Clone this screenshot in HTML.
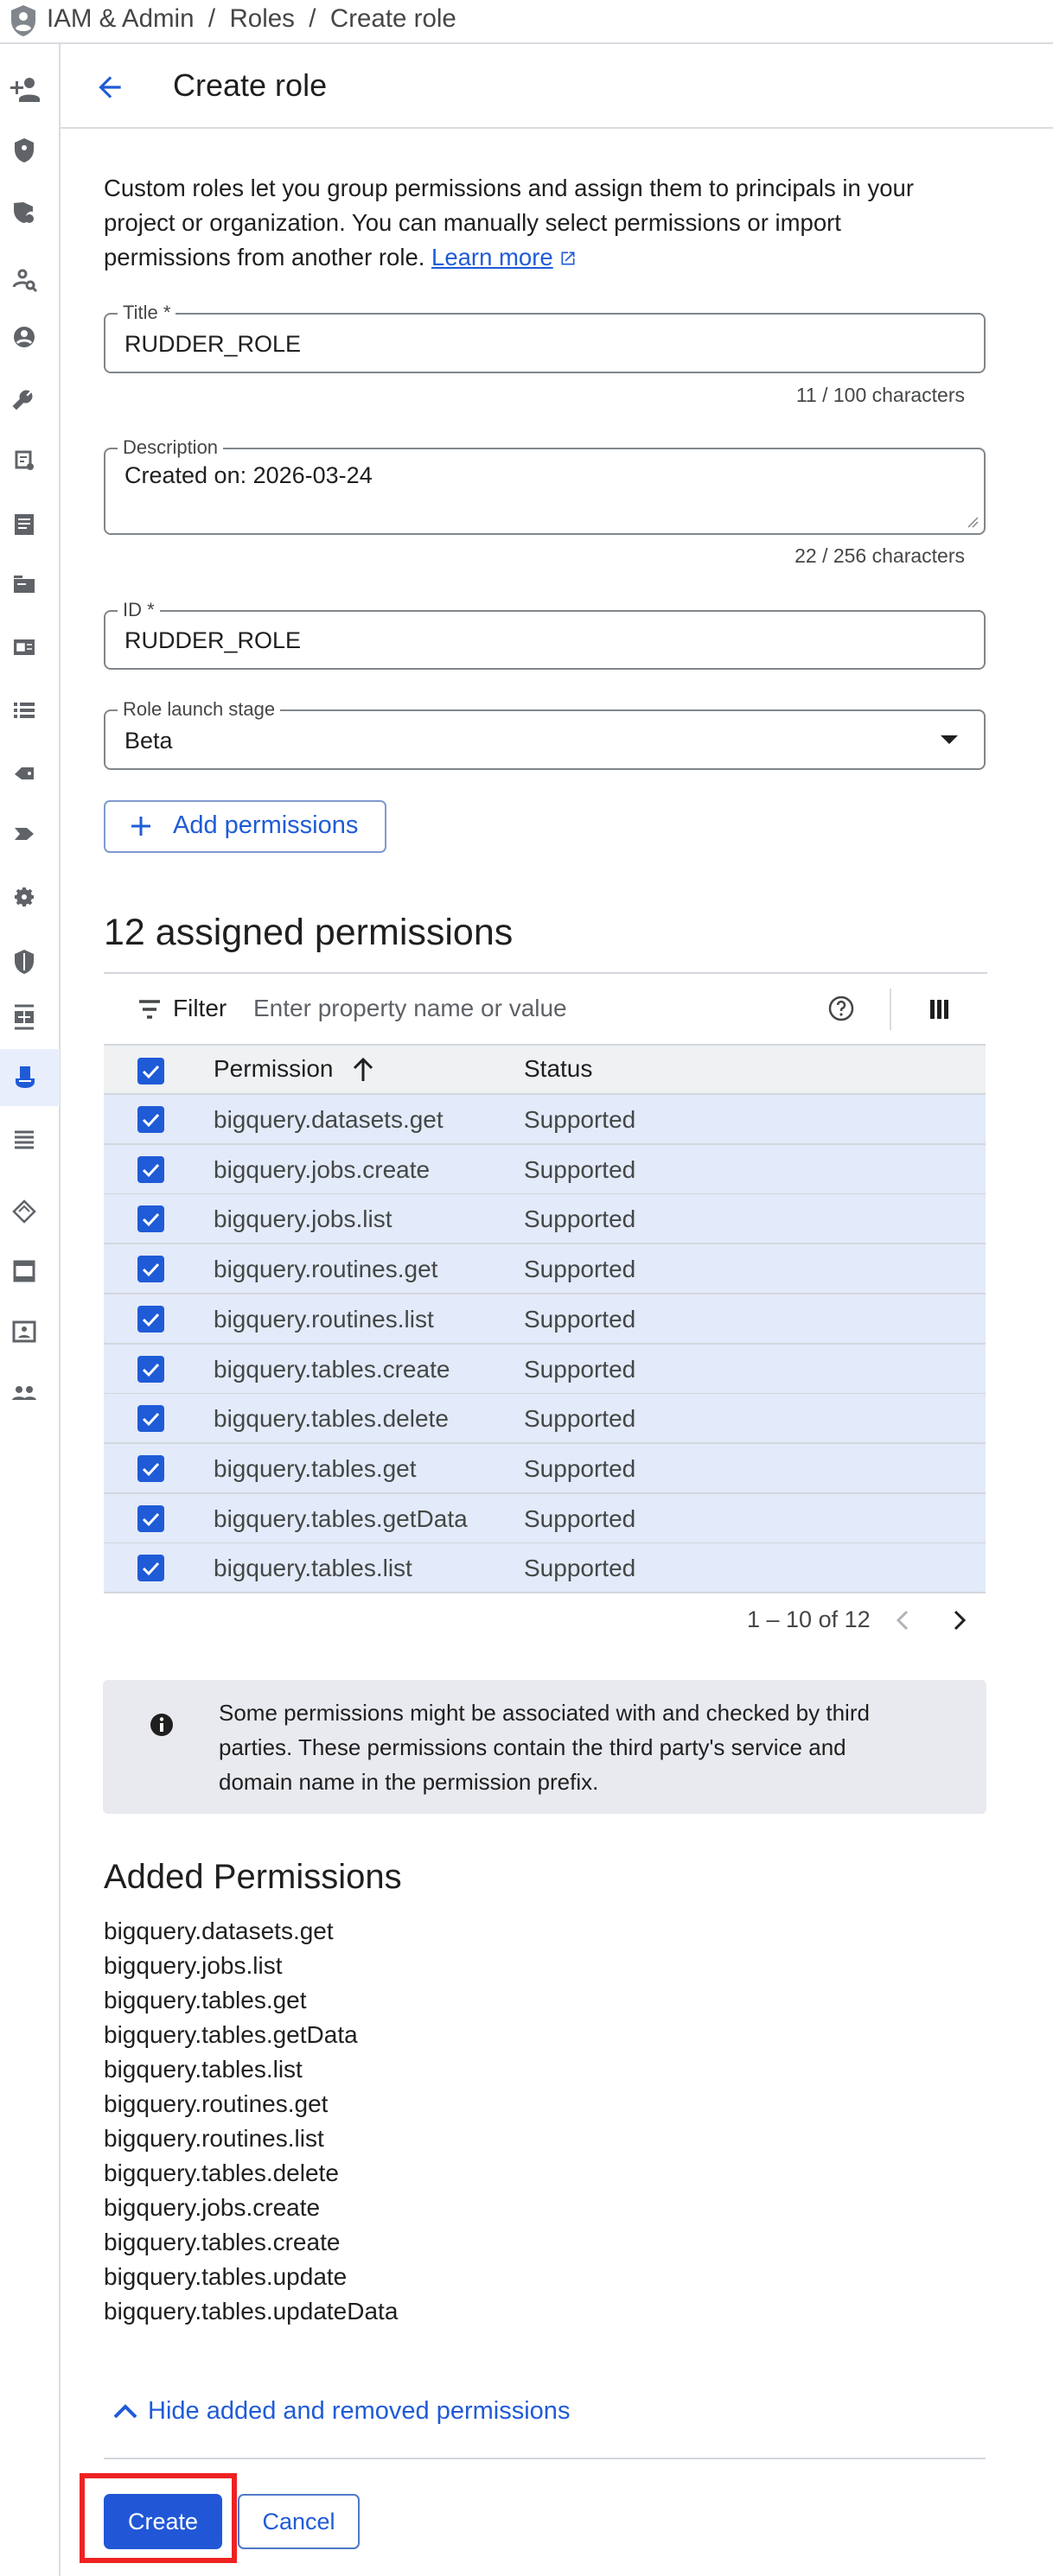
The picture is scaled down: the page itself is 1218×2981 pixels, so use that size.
<!DOCTYPE html>
<html><head><meta charset="utf-8">
<style>
*{box-sizing:border-box;margin:0;padding:0}
body{width:1218px;height:2981px;background:#fff;font-family:"Liberation Sans",Arial,sans-serif;color:#1f1f1f;position:relative;overflow:hidden}
.a{position:absolute;white-space:nowrap}
.hdr{left:0;top:0;width:1218px;height:51px;border-bottom:2px solid #dadce0}
.side{left:0;top:51px;width:70px;height:2930px;border-right:2px solid #dadce0}
.field{position:absolute;left:120px;width:1020px;border:2px solid #80868b;border-radius:8px}
.lab{position:absolute;top:-14px;left:14px;background:#fff;padding:0 6px;font-size:22px;color:#444746;line-height:24px}
.val{position:absolute;left:22px;font-size:27px;color:#1f1f1f}
.help{font-size:23px;color:#444746;right:102px}
.row{position:absolute;left:120px;width:1020px;height:58px;background:#e3eaf9;border-bottom:2px solid #d3d7de}
.cb{position:absolute;left:39px;top:13px;width:31px;height:31px;background:#1f5bd7;border-radius:4px}
.cb svg{position:absolute;left:3px;top:3px}
.row .p{position:absolute;left:127px;top:13px;font-size:28px;color:#444746}
.row .s{position:absolute;left:486px;top:13px;font-size:28px;color:#444746}
.lst div{font-size:28px;line-height:40px;color:#1f1f1f}
</style></head><body>
<div class="a hdr"></div>
<svg class="a" style="left:12px;top:5px" width="30" height="38" viewBox="0 0 30 38"><path d="M15 1 L29 7 V19 C29 28 22 35 15 37 C8 35 1 28 1 19 V7 Z" fill="#80868b"/><circle cx="15" cy="14" r="5" fill="#fff"/><path d="M6 28 C8 22 22 22 24 28 C21 32 9 32 6 28Z" fill="#fff"/></svg>
<div class="a" style="left:54px;top:5px;font-size:29.5px;color:#444746">IAM &amp; Admin &nbsp;/&nbsp; Roles &nbsp;/&nbsp; Create role</div>
<div class="a side"></div>
<div class="a" style="left:0;top:1214px;width:69px;height:66px;background:#e8eefb"></div>
<svg class="a" style="left:0;top:80px" width="60" height="1560" viewBox="0 0 60 1560" fill="#5f6368">
<g transform="translate(0,-80)">
<path d="M12 100h6v-6h3v6h6v3h-6v6h-3v-6h-6z"/><circle cx="34" cy="96" r="6"/><path d="M22 114c2-6 22-6 24 0v4H22z"/>
<path d="M28 160l11 5v8c0 8-5 13-11 15-6-2-11-7-11-15v-8z M28 168a3 3 0 1 0 .01 0z" fill-rule="evenodd"/>
<path d="M27 234l11 5v6c-4-1-8 2-8 6 0 2 1 4 2 5-1 1-3 2-5 2-6-2-11-7-11-15v-8z"/><circle cx="34" cy="253" r="5"/>
<circle cx="26" cy="317" r="4" fill="none" stroke="#5f6368" stroke-width="3"/><path d="M16 332c1-5 12-6 14-4" fill="none" stroke="#5f6368" stroke-width="3"/><circle cx="35" cy="330" r="4" fill="none" stroke="#5f6368" stroke-width="3"/><path d="M38 333l4 4" stroke="#5f6368" stroke-width="3"/>
<circle cx="28" cy="390" r="12"/><circle cx="28" cy="386" r="4" fill="#fff"/><path d="M20 397c3-4 13-4 16 0" fill="none" stroke="#fff" stroke-width="3"/>
<path d="M16 470l8-8a7 7 0 0 1 9-9l-4 4 3 3 4-4a7 7 0 0 1-9 9l-8 8z" stroke="#5f6368" stroke-width="2"/>
<path d="M19 523h16v18H19z" fill="none" stroke="#5f6368" stroke-width="3"/><path d="M23 529h8M23 534h5" stroke="#5f6368" stroke-width="2"/><circle cx="35" cy="540" r="4"/>
<path d="M17 595h22v24H17z"/><path d="M21 601h14M21 606h14M21 611h10" stroke="#fff" stroke-width="2"/>
<path d="M16 670h24v16H16z M16 666h10v3H16z"/><path d="M20 676h10" stroke="#fff" stroke-width="2"/>
<path d="M16 740h24v18H16z"/><path d="M20 745h8v8h-8zM31 746h6M31 751h6" stroke="#fff" stroke-width="1.5" fill="#fff"/>
<path d="M16 813h4v4h-4zM23 813h17v4H23zM16 820h4v4h-4zM23 820h17v4H23zM16 827h4v4h-4zM23 827h17v4H23z"/>
<path d="M17 896l8-8h14v14H25z"/><circle cx="34" cy="895" r="2" fill="#fff"/>
<path d="M17 958h14l8 7-8 7H17l6-7z"/>
<circle cx="28" cy="1038" r="9"/><path d="M28 1027v22M17 1038h22M20 1030l16 16M36 1030l-16 16" stroke="#5f6368" stroke-width="4"/><circle cx="28" cy="1038" r="3" fill="#fff"/>
<path d="M28 1099l11 5v8c0 8-5 13-11 15-6-2-11-7-11-15v-8z"/><path d="M28 1103v20" stroke="#fff" stroke-width="2"/>
<path d="M17 1164h22M17 1190h22" stroke="#5f6368" stroke-width="3"/><path d="M17 1170h22v14H17z"/><path d="M28 1170v14M21 1177h14" stroke="#fff" stroke-width="2"/>
<path d="M17 1310h22M17 1316h22M17 1322h22M17 1328h22" stroke="#5f6368" stroke-width="3"/>
<path d="M28 1390l12 12-12 12-12-12z" fill="none" stroke="#5f6368" stroke-width="2.5"/><path d="M22 1402l6-6 6 6" fill="none" stroke="#5f6368" stroke-width="2"/>
<path d="M17 1460h22v22H17z" fill="none" stroke="#5f6368" stroke-width="3"/><path d="M17 1460h22v5H17zM17 1477h22v5H17z"/>
<path d="M16 1530h24v22H16z" fill="none" stroke="#5f6368" stroke-width="3"/><circle cx="28" cy="1538" r="3"/><path d="M21 1548c2-4 12-4 14 0z"/>
<circle cx="22" cy="1608" r="4"/><circle cx="34" cy="1608" r="4"/><path d="M14 1620c1-5 15-5 16 0zM27 1620c1-5 14-5 15 0z"/>
</g></svg>
<svg class="a" style="left:14px;top:1232px" width="30" height="30" viewBox="0 0 30 30"><path d="M9 2h12v14H9z M4 16h22v4c0 4-4 7-11 7S4 24 4 20z" fill="#1f5bd7"/><path d="M8 19h14" stroke="#fff" stroke-width="2"/></svg>

<svg class="a" style="left:108px;top:82px" width="38" height="38" viewBox="0 0 24 24"><path d="M20 11H7.8l5.6-5.6L12 4l-8 8 8 8 1.4-1.4L7.8 13H20z" fill="#1f5bd7"/></svg>
<div class="a" style="left:200px;top:78px;font-size:36px;color:#1f1f1f">Create role</div>
<div class="a" style="left:70px;top:147px;width:1148px;height:2px;background:#dadce0"></div>

<div class="a" style="left:120px;top:198px;font-size:27.5px;line-height:40px;color:#1f1f1f;white-space:normal;width:1000px">Custom roles let you group permissions and assign them to principals in your project or organization. You can manually select permissions or import permissions from another role. <span style="color:#1f5bd7;text-decoration:underline">Learn more</span> <svg width="20" height="20" viewBox="0 0 24 24" style="vertical-align:-2px"><path d="M19 19H5V5h7V3H3v18h18v-9h-2zM14 3v2h3.6l-9.8 9.8 1.4 1.4L19 6.4V10h2V3z" fill="#1f5bd7"/></svg></div>

<div class="field" style="top:362px;height:70px"><div class="lab">Title *</div><div class="val" style="top:19px">RUDDER_ROLE</div></div>
<div class="a help" style="top:444px">11 / 100 characters</div>
<div class="field" style="top:518px;height:101px"><div class="lab">Description</div><div class="val" style="top:15px">Created on: 2026-03-24</div>
<svg style="position:absolute;right:6px;bottom:6px" width="14" height="14"><path d="M2 13L13 2M7 13l6-6" stroke="#80868b" stroke-width="1.5"/></svg></div>
<div class="a help" style="top:630px">22 / 256 characters</div>
<div class="field" style="top:706px;height:69px"><div class="lab">ID *</div><div class="val" style="top:18px">RUDDER_ROLE</div></div>
<div class="field" style="top:821px;height:70px"><div class="lab">Role launch stage</div><div class="val" style="top:19px">Beta</div>
<svg style="position:absolute;right:30px;top:28px" width="20" height="12"><path d="M0 0h20L10 10z" fill="#1f1f1f"/></svg></div>

<div class="a" style="left:120px;top:926px;width:327px;height:61px;border:2px solid #7f9ad0;border-radius:7px"></div>
<svg class="a" style="left:150px;top:943px" width="26" height="26"><path d="M13 2v22M2 13h22" stroke="#1f5bd7" stroke-width="3"/></svg>
<div class="a" style="left:200px;top:939px;font-size:29px;color:#1f5bd7">Add permissions</div>

<div class="a" style="left:120px;top:1055px;font-size:43px;color:#1f1f1f">12 assigned permissions</div>
<div class="a" style="left:120px;top:1125px;width:1022px;height:2px;background:#d3d7de"></div>
<svg class="a" style="left:159px;top:1156px" width="28" height="24"><path d="M2 3h24M6 12h16M11 21h6" stroke="#444746" stroke-width="3.5"/></svg>
<div class="a" style="left:200px;top:1151px;font-size:28px;color:#1f1f1f">Filter</div>
<div class="a" style="left:293px;top:1151px;font-size:28px;color:#5f6368">Enter property name or value</div>
<svg class="a" style="left:957px;top:1151px" width="32" height="32" viewBox="0 0 32 32"><circle cx="16" cy="16" r="13" fill="none" stroke="#444746" stroke-width="2.5"/><path d="M12 12a4 4 0 1 1 5 4c-1 .5-1 1.5-1 3" fill="none" stroke="#444746" stroke-width="2.5"/><circle cx="16" cy="23" r="1.6" fill="#444746"/></svg>
<div class="a" style="left:1029px;top:1144px;width:2px;height:48px;background:#dadce0"></div>
<svg class="a" style="left:1075px;top:1156px" width="24" height="24"><path d="M1 1h5v22H1zM9 1h5v22H9zM17 1h5v22h-5z" fill="#1f1f1f"/></svg>

<div class="a" style="left:120px;top:1208px;width:1020px;height:59px;background:#eff1f3;border-bottom:2px solid #d3d7de;border-top:2px solid #d3d7de"></div>
<div class="a" style="left:159px;top:1224px;width:31px;height:31px;background:#1f5bd7;border-radius:4px"><svg style="position:absolute;left:3px;top:3px" width="25" height="25"><path d="M4 13l6 6 11-12" fill="none" stroke="#fff" stroke-width="3"/></svg></div>
<div class="a" style="left:247px;top:1221px;font-size:28px;color:#1f1f1f">Permission</div>
<svg class="a" style="left:406px;top:1223px" width="28" height="30"><path d="M14 28V3M4 13L14 3l10 10" fill="none" stroke="#1f1f1f" stroke-width="3"/></svg>
<div class="a" style="left:606px;top:1221px;font-size:28px;color:#1f1f1f">Status</div>

<div class="row" style="top:1267px"><div class="cb"><svg width="25" height="25"><path d="M4 13l6 6 11-12" fill="none" stroke="#fff" stroke-width="3"/></svg></div><div class="p">bigquery.datasets.get</div><div class="s">Supported</div></div>
<div class="row" style="top:1325px"><div class="cb"><svg width="25" height="25"><path d="M4 13l6 6 11-12" fill="none" stroke="#fff" stroke-width="3"/></svg></div><div class="p">bigquery.jobs.create</div><div class="s">Supported</div></div>
<div class="row" style="top:1382px"><div class="cb"><svg width="25" height="25"><path d="M4 13l6 6 11-12" fill="none" stroke="#fff" stroke-width="3"/></svg></div><div class="p">bigquery.jobs.list</div><div class="s">Supported</div></div>
<div class="row" style="top:1440px"><div class="cb"><svg width="25" height="25"><path d="M4 13l6 6 11-12" fill="none" stroke="#fff" stroke-width="3"/></svg></div><div class="p">bigquery.routines.get</div><div class="s">Supported</div></div>
<div class="row" style="top:1498px"><div class="cb"><svg width="25" height="25"><path d="M4 13l6 6 11-12" fill="none" stroke="#fff" stroke-width="3"/></svg></div><div class="p">bigquery.routines.list</div><div class="s">Supported</div></div>
<div class="row" style="top:1556px"><div class="cb"><svg width="25" height="25"><path d="M4 13l6 6 11-12" fill="none" stroke="#fff" stroke-width="3"/></svg></div><div class="p">bigquery.tables.create</div><div class="s">Supported</div></div>
<div class="row" style="top:1613px"><div class="cb"><svg width="25" height="25"><path d="M4 13l6 6 11-12" fill="none" stroke="#fff" stroke-width="3"/></svg></div><div class="p">bigquery.tables.delete</div><div class="s">Supported</div></div>
<div class="row" style="top:1671px"><div class="cb"><svg width="25" height="25"><path d="M4 13l6 6 11-12" fill="none" stroke="#fff" stroke-width="3"/></svg></div><div class="p">bigquery.tables.get</div><div class="s">Supported</div></div>
<div class="row" style="top:1729px"><div class="cb"><svg width="25" height="25"><path d="M4 13l6 6 11-12" fill="none" stroke="#fff" stroke-width="3"/></svg></div><div class="p">bigquery.tables.getData</div><div class="s">Supported</div></div>
<div class="row" style="top:1786px"><div class="cb"><svg width="25" height="25"><path d="M4 13l6 6 11-12" fill="none" stroke="#fff" stroke-width="3"/></svg></div><div class="p">bigquery.tables.list</div><div class="s">Supported</div></div>

<div class="a" style="left:864px;top:1859px;font-size:27px;color:#444746">1 – 10 of 12</div>
<svg class="a" style="left:1034px;top:1862px" width="20" height="26"><path d="M15 3L5 13l10 10" fill="none" stroke="#b0b3b8" stroke-width="3"/></svg>
<svg class="a" style="left:1100px;top:1862px" width="20" height="26"><path d="M5 3l10 10L5 23" fill="none" stroke="#1f1f1f" stroke-width="3"/></svg>

<div class="a" style="left:119px;top:1944px;width:1022px;height:155px;background:#e9eaef;border-radius:6px"></div>
<svg class="a" style="left:173px;top:1982px" width="28" height="28" viewBox="0 0 28 28"><circle cx="14" cy="14" r="13" fill="#1f1f1f"/><rect x="12" y="12" width="4" height="10" fill="#fff"/><circle cx="14" cy="7.5" r="2.2" fill="#fff"/></svg>
<div class="a" style="left:253px;top:1962px;font-size:26px;line-height:40px;color:#1f1f1f">Some permissions might be associated with and checked by third<br>parties. These permissions contain the third party's service and<br>domain name in the permission prefix.</div>

<div class="a" style="left:120px;top:2150px;font-size:40px;color:#1f1f1f">Added Permissions</div>
<div class="a lst" style="left:120px;top:2215px">
<div>bigquery.datasets.get</div><div>bigquery.jobs.list</div><div>bigquery.tables.get</div><div>bigquery.tables.getData</div><div>bigquery.tables.list</div><div>bigquery.routines.get</div><div>bigquery.routines.list</div><div>bigquery.tables.delete</div><div>bigquery.jobs.create</div><div>bigquery.tables.create</div><div>bigquery.tables.update</div><div>bigquery.tables.updateData</div>
</div>

<svg class="a" style="left:130px;top:2780px" width="30" height="20"><path d="M3 17L15 5l12 12" fill="none" stroke="#1f5bd7" stroke-width="4"/></svg>
<div class="a" style="left:171px;top:2774px;font-size:29px;color:#1f5bd7">Hide added and removed permissions</div>
<div class="a" style="left:120px;top:2844px;width:1020px;height:2px;background:#d3d7de"></div>

<div class="a" style="left:120px;top:2886px;width:137px;height:64px;background:#2157d6;border-radius:7px;color:#fff;font-size:27px;text-align:center;line-height:64px">Create</div>
<div class="a" style="left:275px;top:2886px;width:141px;height:64px;border:2px solid #4f78c9;border-radius:7px;color:#1f5bd7;font-size:27px;text-align:center;line-height:60px">Cancel</div>
<div class="a" style="left:92px;top:2862px;width:182px;height:104px;border:6px solid #ee2222"></div>
</body></html>
